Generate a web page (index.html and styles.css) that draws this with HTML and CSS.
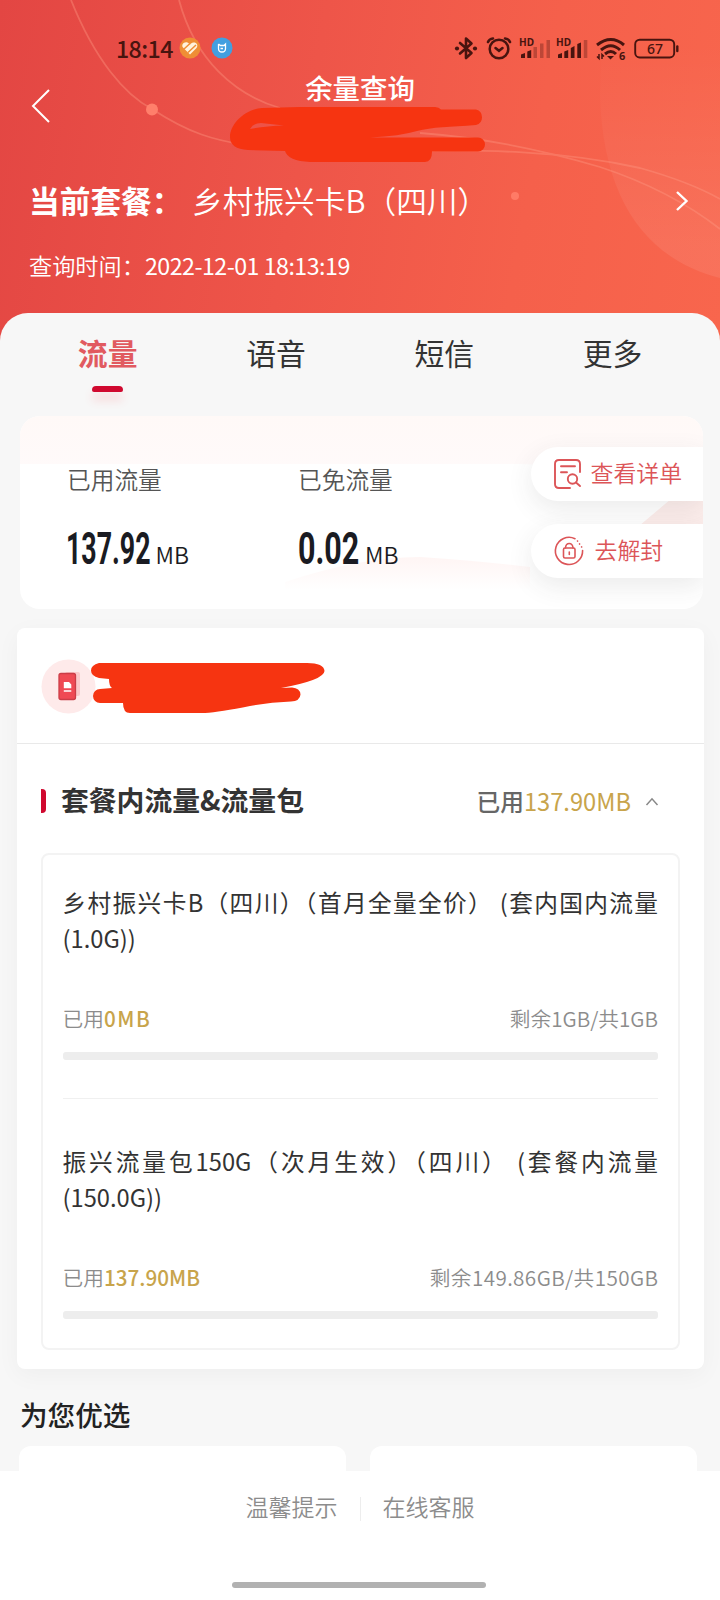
FILE: index.html
```html
<!DOCTYPE html>
<html lang="zh-CN">
<head>
<meta charset="utf-8">
<title>余量查询</title>
<link rel="stylesheet" href="styles.css">
</head>
<body>
<div class="screen">
  <header class="hero">
    <svg class="hero-art" viewBox="0 0 720 350" width="720" height="350" aria-hidden="true">
      <defs><linearGradient id="disc" x1="0" x2="0" y1="0" y2="1"><stop offset=".15" stop-color="#fff" stop-opacity="0"/><stop offset=".9" stop-color="#fff" stop-opacity=".08"/></linearGradient></defs>
      <path d="M720 0H606Q601 50 600 95C603 205 650 260 720 278Z" fill="url(#disc)"/>
      <g fill="none" stroke="#ff9a84" stroke-width="1.8" opacity=".38">
        <path d="M71 0C95 60 125 95 152 109C190 134 215 140 245 145C300 155 360 149 420 151C480 150 560 150 640 168Q690 182 720 199"/>
        <path d="M179 0C195 60 235 95 280 108M420 133C500 139 560 155 600 167Q670 190 720 229"/>
      </g>
      <circle cx="152" cy="109.500" r="6" fill="#ff7f6b"/>
      <circle cx="515" cy="196" r="4" fill="#ff7b66"/>
    </svg>
    <div class="status">
      <span class="clock">18:14</span>
      <svg class="app-a" viewBox="0 0 22 22" width="22" height="22"><circle cx="11" cy="11" r="10.500" fill="#ef8e35"/><path d="M11 17.500L4 10.500C1.500 7 6.500 3 10 6.500L11 7.500C15 3 20.500 7 17.500 11Z" fill="#fff3dc"/><path d="M5 12L11 6.500M9 15.500L17 8" stroke="#ef8e35" stroke-width="1.500"/></svg>
      <svg class="app-b" viewBox="0 0 22 22" width="22" height="22"><circle cx="11" cy="11" r="10.500" fill="#429fe0"/><path d="M7.500 7V11.500Q7.500 15 11 15T14.500 11.500V7L13 8.500H9.500L7.500 7M9.500 11.500H12" fill="none" stroke="#fff" stroke-width="1.300"/></svg>
      <div class="status-icons">
        <svg viewBox="454 34 25 28" width="25" height="28"><path d="M460 43L471.500 53L466 58V38.500L471.500 43.500L460 53.500" fill="none" stroke="#48140f" stroke-width="2.600" stroke-linejoin="round" stroke-linecap="round"/><circle cx="457" cy="48.500" r="2.100" fill="#48140f"/><circle cx="475" cy="48.500" r="2.100" fill="#48140f"/></svg>
        <svg viewBox="485 34 28 28" width="28" height="28"><g fill="none" stroke="#48140f" stroke-width="2.500" stroke-linecap="round"><circle cx="499" cy="49" r="9.300"/><path d="M495.500 48L499 50.800L502.500 48M488 42Q489 39 493 38.500M510 42Q509 39 505 38.500"/></g></svg>
        <svg viewBox="517 34 33 28" width="33" height="28"><text class="hd" x="518" y="45.500" textLength="15" lengthAdjust="spacingAndGlyphs">HD</text><path d="M520 58V54.500L524 53V58ZM526.300 58V51.500L530.200 50V58Z" fill="#48140f"/><path d="M532.500 58V47H536V58ZM539 58V43.500H542.500V58ZM545.500 58V40H549V58Z" fill="#48140f" opacity=".32"/></svg>
        <svg viewBox="555 34 33 28" width="33" height="28"><text class="hd" x="556" y="45.500" textLength="15" lengthAdjust="spacingAndGlyphs">HD</text><path d="M558 58V54.500L562 53V58ZM564.300 58V51.500L568.200 50V58ZM570.800 58V48L574.500 46V58ZM577.300 58V44L581 42.500V58Z" fill="#48140f"/><path d="M583.800 58V40H587.300V58Z" fill="#48140f" opacity=".32"/></svg>
        <svg viewBox="595 34 32 28" width="32" height="28"><g fill="none" stroke="#48140f" stroke-width="3"><path d="M597 45Q611 34 624 45M601 50Q611 41.500 620 50M605 54Q611 49 616 54"/></g><path d="M607 56H614L610.500 59.500Z" fill="#48140f"/><path d="M599 54V58.500L597 56.500M602 59V54.500L604 56.500" fill="none" stroke="#48140f" stroke-width="1.500"/><text class="six" x="619" y="60">6</text></svg>
        <svg viewBox="634 34 46 28" width="46" height="28"><rect x="635.200" y="39.700" width="39" height="17.800" rx="4.500" fill="none" stroke="#48140f" stroke-width="1.900"/><path d="M677.300 46.500V51" stroke="#48140f" stroke-width="2.400" stroke-linecap="round"/><text class="batt" x="647" y="54" textLength="16" lengthAdjust="spacingAndGlyphs">67</text></svg>
      </div>
    </div>
    <div class="nav">
      <svg class="back" viewBox="0 0 20 36" width="20" height="36"><path d="M18 2L2 18L18 34" fill="none" stroke="#fff" stroke-width="2"/></svg>
      <h1 class="title">余量查询</h1>
    </div>
    <svg class="mask-top" viewBox="228 104 260 60" width="260" height="60" aria-hidden="true"><path fill="#f63411" fill-rule="evenodd" d="M230 137C230 124 245 109 262 108L300 107H435Q439 107 441 109.500H476A8 8 0 0 1 476 125C450 127 432 127 417 131Q400 136 370 137.500H478A7 7 0 0 1 478 151.500H432Q432 162 425 162H310Q288 161 285 151L248 150Q230 149 230 137ZM250 129Q253 123 261 123L284 125.500Q265 126 250 129Z"/></svg>
    <div class="plan">
      <span class="plan-label">当前套餐：</span><span class="plan-name">乡村振兴卡B（四川）</span>
      <svg class="plan-go" viewBox="0 0 14 22" width="14" height="22"><path d="M2 2L11.500 11L2 20" fill="none" stroke="#fff" stroke-width="2.400"/></svg>
    </div>
    <div class="time">查询时间：<span class="time-val">2022-12-01 18:13:19</span></div>
  </header>

  <main class="sheet">
    <nav class="tabs">
      <span class="tab active">流量</span><span class="tab">语音</span><span class="tab">短信</span><span class="tab">更多</span>
    </nav>

    <section class="summary">
      <svg class="summary-art" viewBox="20 416 683 193" width="683" height="193" aria-hidden="true">
        <defs>
          <linearGradient id="top" x1="0" x2="0" y1="0" y2="1"><stop offset="0" stop-color="#fff9f7"/><stop offset="1" stop-color="#fffafa"/></linearGradient>
          <linearGradient id="wave" x1="0" x2="0" y1="0" y2="1"><stop offset="0" stop-color="#fff5f4"/><stop offset="1" stop-color="#fff"/></linearGradient>
        </defs>
        <path d="M20 416H703V470L520 464H20Z" fill="url(#top)"/>
        <path d="M285 582Q360 557 420 557Q470 560 530 567V590H285Z" fill="url(#wave)"/>
        <path d="M633 531L671 499H703V531Z" fill="#fdeeec"/>
      </svg>
      <div class="stat used"><span class="stat-label">已用流量</span>
        <span class="stat-value"><span class="num w-used"><span class="big">137.92</span></span><span class="unit">MB</span></span></div>
      <div class="stat free"><span class="stat-label">已免流量</span>
        <span class="stat-value"><span class="num w-free"><span class="big">0.02</span></span><span class="unit">MB</span></span></div>
      <div class="actions">
        <div class="pill"><svg viewBox="552 457 32 34" width="32" height="34"><g fill="none" stroke="#dc5558" stroke-width="1.900" stroke-linecap="round"><path d="M570 488H559Q555 488 555 484V464Q555 460 559 460H576Q580 460 580 464V472M561 466.300H575M561 472.300H567"/><circle cx="572.500" cy="479" r="4.700"/><path d="M576 482.500L580 486"/></g></svg><span>查看详单</span></div>
        <div class="pill second"><svg viewBox="553 535 32 32" width="32" height="32"><g fill="none" stroke="#dc5558" stroke-width="1.600" stroke-linecap="round"><path d="M575 538.700A13.600 13.600 0 1 0 582.600 550.500"/><path d="M577.500 541L582 547.500" stroke-dasharray=".1 3.500"/><rect x="563.500" y="548" width="11.500" height="10" rx="1.500"/><path d="M565.500 548V547.500Q566 543.500 569.200 543.500T573 547.500V548M569.300 552V554.500"/></g></svg><span>去解封</span></div>
      </div>
    </section>

    <section class="detail">
      <div class="owner">
        <svg viewBox="40 656 288 60" width="288" height="60" aria-hidden="true"><circle cx="68.500" cy="686.500" r="27" fill="#feeaea"/><rect x="65" y="672" width="15" height="24" rx="2" fill="#fbc9ca"/><rect x="59" y="673.500" width="16.500" height="26" rx="2" fill="#ef4a54" stroke="#cb3d47" stroke-width="1.300"/><path d="M63.800 682H69L71.300 684.500V688.300H63.800ZM63.800 690.300H71.300V691.800H63.800Z" fill="#fff"/><path fill="#f63411" d="M99 663H307Q324 663 324.500 671Q324 680 281 688L292 687.500Q300 688 300.500 694.500Q300 701 291 701.500Q270 702 250 706Q220 712 205 713H130Q123 713 123 703H100A7 7 0 0 1 100 689L112 688Q109 686 109 679L99 678Q91 676 91 670.500T99 663Z"/></svg>
      </div>
      <div class="group">
        <div class="group-head">
          <span class="mark"></span><h2>套餐内流量&amp;流量包</h2>
          <span class="group-used">已用<span class="gold">137.90MB</span></span>
          <svg viewBox="0 0 14 9" width="14" height="9"><path d="M1.500 8L7 1.800L12.500 8" fill="none" stroke="#888" stroke-width="1.500"/></svg>
        </div>
        <div class="box">
          <article class="pack">
            <p class="pack-name">乡村振兴卡B（四川）（首月全量全价） (套内国内流量(1.0G))</p>
            <div class="pack-row"><span>已用<b class="wide">0MB</b></span><span>剩余1GB/共1GB</span></div>
            <div class="bar"></div>
          </article>
          <article class="pack next">
            <p class="pack-name">振兴流量包150G（次月生效）（四川） (套餐内流量(150.0G))</p>
            <div class="pack-row"><span>已用<b>137.90MB</b></span><span class="total">剩余149.86GB/共150GB</span></div>
            <div class="bar"></div>
          </article>
        </div>
      </div>
    </section>

    <h3 class="picks-title">为您优选</h3>
    <div class="picks"><div class="pick"></div><div class="pick"></div></div>
  </main>

  <footer class="foot">
    <div class="links"><span>温馨提示</span><i></i><span>在线客服</span></div>
    <div class="home"></div>
  </footer>
</div>
</body>
</html>
```
FILE: styles.css
```css
* { box-sizing: border-box; }
body { margin: 0; font-family: "Noto Sans CJK SC", "Noto Sans", sans-serif; color: #333; }
svg { display: block; flex: none; }
h1, h2, h3, p { margin: 0; font-weight: 500; }
.screen { width: 720px; height: 1600px; overflow: hidden; display: flex; flex-direction: column; background: #f7f7f7; }

.hero { position: relative; height: 313px; flex: none; color: #fff; }
.hero-art { position: absolute; left: 0; top: 0; background: linear-gradient(100deg, #e34643 0%, #ee5549 42%, #f5604b 72%, #f8664d 100%); }
.status { position: relative; height: 64px; padding: 34px 40px 0 116px; display: flex; }
.clock { width: 63px; font-size: 23.200px; line-height: 28px; font-weight: 500; letter-spacing: -.6px; color: #48140f; }
.app-a { margin-top: 3px; }
.app-b { margin: 3px 0 0 10px; }
.status-icons { margin-left: auto; display: flex; }
.status-icons svg + svg { margin-left: 6px; }
.status-icons svg:nth-child(3), .status-icons svg:nth-child(4) { margin-left: 4.500px; }
.status-icons svg:nth-child(5), .status-icons svg:nth-child(6) { margin-left: 7px; }
.hd { font: 700 10.500px "Noto Sans", sans-serif; fill: #48140f; }
.six { font: 700 11px "Noto Sans", sans-serif; fill: #48140f; }
.batt { font: 500 14.500px "Noto Sans", sans-serif; fill: #48140f; }
.nav { position: relative; height: 112px; display: flex; justify-content: center; }
.back { position: absolute; left: 31px; top: 24px; }
.title { font-size: 27.400px; line-height: 40px; margin-top: 3px; }
.mask-top { position: absolute; left: 228px; top: 104px; }
.plan { position: relative; display: flex; align-items: center; height: 48px; padding: 0 31px 0 29px; font-size: 30.700px; line-height: 48px; white-space: nowrap; }
.plan-label { font-weight: 700; width: 163px; }
.plan-name { font-weight: 350; }
.plan-go { margin-left: auto; margin-top: 2px; }
.time { position: relative; margin-top: 21px; padding-left: 29px; font-size: 23.200px; line-height: 40px; font-weight: 350; display: flex; }
.time-val { letter-spacing: -.5px; font-weight: 400; }

.sheet { position: relative; flex: 1; min-height: 0; overflow: hidden; background: #f7f7f7; border-radius: 28px 28px 0 0; }
.tabs { display: grid; grid-template-columns: repeat(4, 168.300px); padding: 17px 0 0 23.500px; height: 103px; text-align: center; font-size: 29.800px; line-height: 44px; }
.tab.active { color: #e15a60; font-weight: 700; }
.tab.active::after { content: ""; display: block; width: 31px; height: 6px; margin: 12px auto 0; border-radius: 4px 4px 2px 2px; background: #d0092f; box-shadow: 0 8px 10px rgba(255, 80, 90, .2); }

.summary { position: relative; margin-left: 20px; width: 682.500px; height: 193px; border-radius: 20px; overflow: hidden; background: #fff; display: flex; }
.summary-art { position: absolute; left: 0; top: 0; }
.stat { position: relative; display: flex; flex-direction: column; padding: 46px 0 0 47px; width: 231px; }
.stat-label { font-size: 23.700px; line-height: 35px; font-weight: 350; color: #555; }
.stat-value { display: flex; align-items: baseline; margin-top: 28px; height: 50px; line-height: 50px; }
.num { display: block; flex: none; white-space: nowrap; }
.big { display: inline-block; font: 700 43.500px/50px Roboto, sans-serif; color: #1a1b22; transform-origin: 0 50%; }
.w-used { width: 89.500px; margin-left: -1px; }
.w-used .big { transform: scaleX(.615); }
.w-free { width: 67px; }
.w-free .big { transform: scaleX(.7); }
.num .big { margin-right: -60px; }
.unit { font-size: 23px; font-weight: 350; color: #1a1b22; }
.actions { position: relative; margin-left: auto; padding-top: 31px; display: flex; flex-direction: column; gap: 23px; }
.pill { width: 172px; height: 54px; border-radius: 27px 0 0 27px; background: #fff; display: flex; align-items: center; padding-left: 21px; gap: 7px; color: #dc5558; font-size: 22.900px; font-weight: 350; box-shadow: 0 8px 26px rgba(60, 60, 60, .1); line-height: 32px; }
.pill span { padding-bottom: 4px; }
.pill.second { gap: 10px; padding-left: 22px; }

.detail { margin: 19px 0 0 17px; width: 687px; height: 741px; border-radius: 8px; background: #fff; box-shadow: 0 6px 24px rgba(0, 0, 0, .04); }
.owner { height: 115px; padding: 28px 0 0 23px; }
.group { border-top: 1px solid #e9e9e9; padding: 0 24px; }
.group-head { height: 109px; display: flex; align-items: center; padding: 5px 21px 0 0; }
.mark { width: 5px; height: 24px; margin-right: 15px; background: #d0092f; border-radius: 0 4px 4px 0; }
.group-head h2 { font-size: 27.800px; line-height: 40px; font-weight: 700; margin: 0 auto 4px 0; }
.group-used { font-size: 23.700px; line-height: 36px; font-weight: 500; color: #666; margin: 0 14px 1px 0; }
.gold { color: #c8a44b; font-weight: 400; }
.box { height: 497px; border: 2px solid #f3f3f3; border-radius: 8px; padding: 27px 20px 0 19.500px; }
.pack-name { font-size: 23.700px; line-height: 36px; font-weight: 400; text-align: justify; color: #333; height: 72px; padding-top: 2px; }
.pack-row { display: flex; justify-content: space-between; margin-top: 48px; font-size: 20.700px; line-height: 32px; font-weight: 350; color: #8c8c8c; }
.pack-row b { font-weight: 500; color: #c8a44b; }
.wide { letter-spacing: 1.600px; }
.total { letter-spacing: .4px; margin-right: -.4px; }
.bar { height: 8px; border-radius: 3px; background: #ededed; margin-top: 18px; }
.pack.next { margin-top: 38px; border-top: 1px solid #f0f0f0; padding-top: 42px; }

.picks-title { font-size: 27.600px; line-height: 40px; margin: 25px 0 0 20px; color: #222; }
.picks { display: flex; gap: 24px; padding-left: 19px; margin-top: 12px; }
.pick { width: 327px; height: 60px; border-radius: 12px; background: #fff; }

.foot { height: 129px; flex: none; background: #fff; display: flex; flex-direction: column; align-items: center; }
.links { display: flex; align-items: center; padding-top: 18px; font-size: 23px; line-height: 34px; font-weight: 350; color: #8c8c8c; }
.links i { width: 1px; height: 24px; background: #ededed; margin: 5px 22px 0; }
.home { width: 254px; height: 6px; border-radius: 3px; background: #b1b1b1; margin: 59px 2px 0 0; }
```
